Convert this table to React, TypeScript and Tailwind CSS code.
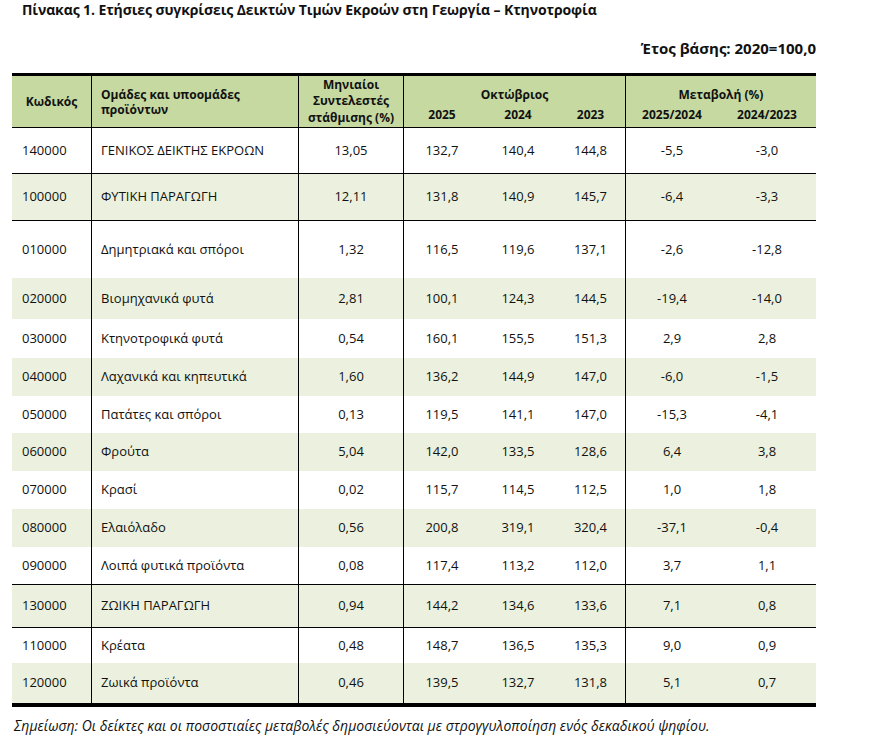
const rows = [
  { code: '140000', name: 'ΓΕΝΙΚΟΣ ΔΕΙΚΤΗΣ ΕΚΡΟΩΝ', w: '13,05', v: ['132,7', '140,4', '144,8'], d: ['-5,5', '-3,0'], h: 'h-[46px]', line: true },
  { code: '100000', name: 'ΦΥΤΙΚΗ ΠΑΡΑΓΩΓΗ', w: '12,11', v: ['131,8', '140,9', '145,7'], d: ['-6,4', '-3,3'], h: 'h-[47px]', line: true },
  { code: '010000', name: 'Δημητριακά και σπόροι', w: '1,32', v: ['116,5', '119,6', '137,1'], d: ['-2,6', '-12,8'], h: 'h-[57px]' },
  { code: '020000', name: 'Βιομηχανικά φυτά', w: '2,81', v: ['100,1', '124,3', '144,5'], d: ['-19,4', '-14,0'], h: 'h-[41px]' },
  { code: '030000', name: 'Κτηνοτροφικά φυτά', w: '0,54', v: ['160,1', '155,5', '151,3'], d: ['2,9', '2,8'], h: 'h-[39px]' },
  { code: '040000', name: 'Λαχανικά και κηπευτικά', w: '1,60', v: ['136,2', '144,9', '147,0'], d: ['-6,0', '-1,5'], h: 'h-[38px]' },
  { code: '050000', name: 'Πατάτες και σπόροι', w: '0,13', v: ['119,5', '141,1', '147,0'], d: ['-15,3', '-4,1'], h: 'h-[37px]' },
  { code: '060000', name: 'Φρούτα', w: '5,04', v: ['142,0', '133,5', '128,6'], d: ['6,4', '3,8'], h: 'h-[38px]' },
  { code: '070000', name: 'Κρασί', w: '0,02', v: ['115,7', '114,5', '112,5'], d: ['1,0', '1,8'], h: 'h-[38px]' },
  { code: '080000', name: 'Ελαιόλαδο', w: '0,56', v: ['200,8', '319,1', '320,4'], d: ['-37,1', '-0,4'], h: 'h-[38px]' },
  { code: '090000', name: 'Λοιπά φυτικά προϊόντα', w: '0,08', v: ['117,4', '113,2', '112,0'], d: ['3,7', '1,1'], h: 'h-[38px]', line: true },
  { code: '130000', name: 'ΖΩΙΚΗ ΠΑΡΑΓΩΓΗ', w: '0,94', v: ['144,2', '134,6', '133,6'], d: ['7,1', '0,8'], h: 'h-[43px]', line: true },
  { code: '110000', name: 'Κρέατα', w: '0,48', v: ['148,7', '136,5', '135,3'], d: ['9,0', '0,9'], h: 'h-[35px]' },
  { code: '120000', name: 'Ζωικά προϊόντα', w: '0,46', v: ['139,5', '132,7', '131,8'], d: ['5,1', '0,7'], h: 'h-[40px]' },
];

const cols = 'grid grid-cols-[80px_207px_105px_76px_76px_70px_92px_98px]';

export default function App() {
  return (
    <div className="min-h-screen bg-white text-[#111] font-['Open_Sans',sans-serif]">
      <h1 className="pl-[22px] pt-px text-[14px] leading-[18px] font-bold tracking-[-0.1px]">
        Πίνακας 1. Ετήσιες συγκρίσεις Δεικτών Τιμών Εκροών στη Γεωργία – Κτηνοτροφία
      </h1>
      <div className="w-[816px] mt-[20px] text-right text-[15px] leading-[18px] font-bold">
        Έτος βάσης: 2020=100,0
      </div>

      <div className="ml-[12px] mt-[16px] w-[804px] border-t-[3px] border-b-[4px] border-black text-[13px]">
        {/* header */}
        <div className={`${cols} grid-rows-[26px_25px] bg-[#c5d9a0] border-b border-black font-bold text-[12px] leading-[15px]`}>
          <div className="row-span-2 flex items-center justify-center border-r border-black">Κωδικός</div>
          <div className="row-span-2 flex items-center pl-[9px] pr-[40px] border-r border-black">
            Ομάδες και υποομάδες προϊόντων
          </div>
          <div className="row-span-2 flex flex-col items-center justify-center text-center leading-[16.5px] border-r border-black">
            <span>Μηνιαίοι</span>
            <span>Συντελεστές</span>
            <span>στάθμισης (%)</span>
          </div>
          <div className="col-span-3 flex items-end justify-center border-r border-black">Οκτώβριος</div>
          <div className="col-span-2 flex items-end justify-center">Μεταβολή (%)</div>
          <div className="flex items-center justify-center">2025</div>
          <div className="flex items-center justify-center">2024</div>
          <div className="flex items-center justify-center border-r border-black">2023</div>
          <div className="flex items-center justify-center">2025/2024</div>
          <div className="flex items-center justify-center">2024/2023</div>
        </div>

        {rows.map((r, i) => (
          <div
            key={r.code}
            className={`${cols} ${r.h} ${i % 2 === 1 ? 'bg-[#ebf1de]' : 'bg-white'} ${r.line ? 'border-b border-black' : ''}`}
          >
            <div className="flex items-center pl-[10px] border-r border-black">{r.code}</div>
            <div className="flex items-center pl-[9px] border-r border-black">{r.name}</div>
            <div className="flex items-center justify-center border-r border-black">{r.w}</div>
            <div className="flex items-center justify-center">{r.v[0]}</div>
            <div className="flex items-center justify-center">{r.v[1]}</div>
            <div className="flex items-center justify-center border-r border-black">{r.v[2]}</div>
            <div className="flex items-center justify-center">{r.d[0]}</div>
            <div className="flex items-center justify-center">{r.d[1]}</div>
          </div>
        ))}
      </div>

      <p className="pl-[14px] mt-[10px] text-[14px] leading-[17px] italic">
        Σημείωση: Οι δείκτες και οι ποσοστιαίες μεταβολές δημοσιεύονται με στρογγυλοποίηση ενός δεκαδικού ψηφίου.
      </p>
    </div>
  );
}
